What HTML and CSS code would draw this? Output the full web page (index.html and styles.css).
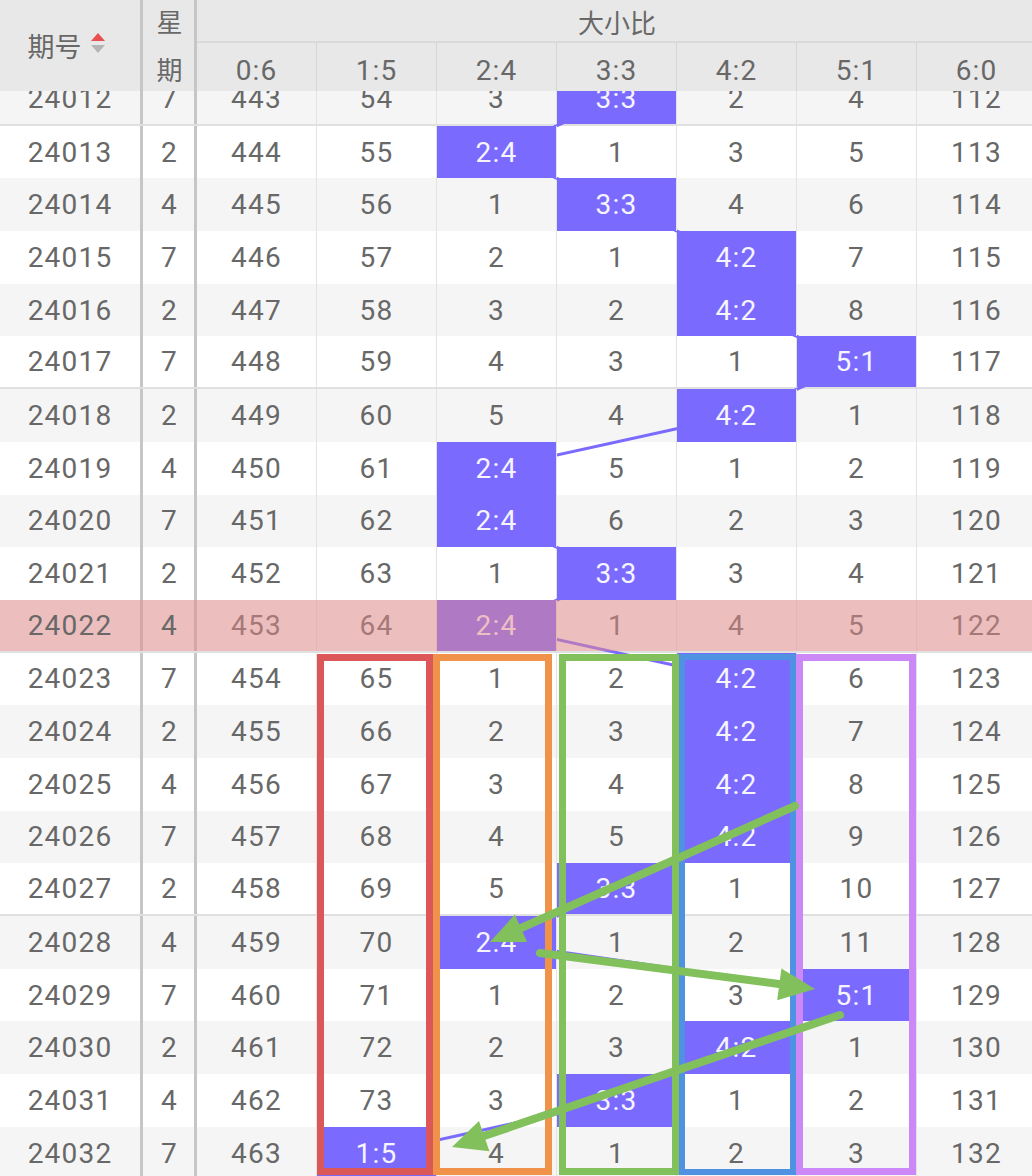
FILE: index.html
```html
<!DOCTYPE html>
<html lang="zh-CN">
<head>
<meta charset="utf-8">
<title>大小比走势</title>
<link rel="stylesheet" href="styles.css">
</head>
<body>
<div class="page">
  <div class="table">
    <div class="head">
      <div class="h-issue"><span>期号</span>
        <svg class="sort" width="14" height="21" viewBox="0 0 14 21"><polygon points="7,0 14,8 0,8" fill="#e94f4f"/><polygon points="0,12 14,12 7,20" fill="#b5b5b5"/></svg>
      </div>
      <div class="h-week"><span>星</span><span>期</span></div>
      <div class="h-ratio">
        <div class="h-title">大小比</div>
        <div class="h-cols"><div>0:6</div><div>1:5</div><div>2:4</div><div>3:3</div><div>4:2</div><div>5:1</div><div>6:0</div></div>
      </div>
    </div>
    <div class="body">
      <div class="rows">
        <div class="row alt grp"><div class="c c-issue">24012</div><div class="c c-week">7</div><div class="c c-r">443</div><div class="c c-r">54</div><div class="c c-r">3</div><div class="c c-r on">3:3</div><div class="c c-r">2</div><div class="c c-r">4</div><div class="c c-r">112</div></div>
        <div class="row"><div class="c c-issue">24013</div><div class="c c-week">2</div><div class="c c-r">444</div><div class="c c-r">55</div><div class="c c-r on">2:4</div><div class="c c-r">1</div><div class="c c-r">3</div><div class="c c-r">5</div><div class="c c-r">113</div></div>
        <div class="row alt"><div class="c c-issue">24014</div><div class="c c-week">4</div><div class="c c-r">445</div><div class="c c-r">56</div><div class="c c-r">1</div><div class="c c-r on">3:3</div><div class="c c-r">4</div><div class="c c-r">6</div><div class="c c-r">114</div></div>
        <div class="row"><div class="c c-issue">24015</div><div class="c c-week">7</div><div class="c c-r">446</div><div class="c c-r">57</div><div class="c c-r">2</div><div class="c c-r">1</div><div class="c c-r on">4:2</div><div class="c c-r">7</div><div class="c c-r">115</div></div>
        <div class="row alt"><div class="c c-issue">24016</div><div class="c c-week">2</div><div class="c c-r">447</div><div class="c c-r">58</div><div class="c c-r">3</div><div class="c c-r">2</div><div class="c c-r on">4:2</div><div class="c c-r">8</div><div class="c c-r">116</div></div>
        <div class="row grp"><div class="c c-issue">24017</div><div class="c c-week">7</div><div class="c c-r">448</div><div class="c c-r">59</div><div class="c c-r">4</div><div class="c c-r">3</div><div class="c c-r">1</div><div class="c c-r on">5:1</div><div class="c c-r">117</div></div>
        <div class="row alt"><div class="c c-issue">24018</div><div class="c c-week">2</div><div class="c c-r">449</div><div class="c c-r">60</div><div class="c c-r">5</div><div class="c c-r">4</div><div class="c c-r on">4:2</div><div class="c c-r">1</div><div class="c c-r">118</div></div>
        <div class="row"><div class="c c-issue">24019</div><div class="c c-week">4</div><div class="c c-r">450</div><div class="c c-r">61</div><div class="c c-r on">2:4</div><div class="c c-r">5</div><div class="c c-r">1</div><div class="c c-r">2</div><div class="c c-r">119</div></div>
        <div class="row alt"><div class="c c-issue">24020</div><div class="c c-week">7</div><div class="c c-r">451</div><div class="c c-r">62</div><div class="c c-r on">2:4</div><div class="c c-r">6</div><div class="c c-r">2</div><div class="c c-r">3</div><div class="c c-r">120</div></div>
        <div class="row"><div class="c c-issue">24021</div><div class="c c-week">2</div><div class="c c-r">452</div><div class="c c-r">63</div><div class="c c-r">1</div><div class="c c-r on">3:3</div><div class="c c-r">3</div><div class="c c-r">4</div><div class="c c-r">121</div></div>
        <div class="row alt grp hl"><div class="c c-issue"><span class="lift">24022</span></div><div class="c c-week"><span class="lift">4</span></div><div class="c c-r">453</div><div class="c c-r">64</div><div class="c c-r on">2:4</div><div class="c c-r">1</div><div class="c c-r">4</div><div class="c c-r">5</div><div class="c c-r">122</div></div>
        <div class="row"><div class="c c-issue">24023</div><div class="c c-week">7</div><div class="c c-r">454</div><div class="c c-r">65</div><div class="c c-r">1</div><div class="c c-r">2</div><div class="c c-r on">4:2</div><div class="c c-r">6</div><div class="c c-r">123</div></div>
        <div class="row alt"><div class="c c-issue">24024</div><div class="c c-week">2</div><div class="c c-r">455</div><div class="c c-r">66</div><div class="c c-r">2</div><div class="c c-r">3</div><div class="c c-r on">4:2</div><div class="c c-r">7</div><div class="c c-r">124</div></div>
        <div class="row"><div class="c c-issue">24025</div><div class="c c-week">4</div><div class="c c-r">456</div><div class="c c-r">67</div><div class="c c-r">3</div><div class="c c-r">4</div><div class="c c-r on">4:2</div><div class="c c-r">8</div><div class="c c-r">125</div></div>
        <div class="row alt"><div class="c c-issue">24026</div><div class="c c-week">7</div><div class="c c-r">457</div><div class="c c-r">68</div><div class="c c-r">4</div><div class="c c-r">5</div><div class="c c-r on">4:2</div><div class="c c-r">9</div><div class="c c-r">126</div></div>
        <div class="row grp"><div class="c c-issue">24027</div><div class="c c-week">2</div><div class="c c-r">458</div><div class="c c-r">69</div><div class="c c-r">5</div><div class="c c-r on">3:3</div><div class="c c-r">1</div><div class="c c-r">10</div><div class="c c-r">127</div></div>
        <div class="row alt"><div class="c c-issue">24028</div><div class="c c-week">4</div><div class="c c-r">459</div><div class="c c-r">70</div><div class="c c-r on">2:4</div><div class="c c-r">1</div><div class="c c-r">2</div><div class="c c-r">11</div><div class="c c-r">128</div></div>
        <div class="row"><div class="c c-issue">24029</div><div class="c c-week">7</div><div class="c c-r">460</div><div class="c c-r">71</div><div class="c c-r">1</div><div class="c c-r">2</div><div class="c c-r">3</div><div class="c c-r on">5:1</div><div class="c c-r">129</div></div>
        <div class="row alt"><div class="c c-issue">24030</div><div class="c c-week">2</div><div class="c c-r">461</div><div class="c c-r">72</div><div class="c c-r">2</div><div class="c c-r">3</div><div class="c c-r on">4:2</div><div class="c c-r">1</div><div class="c c-r">130</div></div>
        <div class="row"><div class="c c-issue">24031</div><div class="c c-week">4</div><div class="c c-r">462</div><div class="c c-r">73</div><div class="c c-r">3</div><div class="c c-r on">3:3</div><div class="c c-r">1</div><div class="c c-r">2</div><div class="c c-r">131</div></div>
        <div class="row alt"><div class="c c-issue">24032</div><div class="c c-week">7</div><div class="c c-r">463</div><div class="c c-r on">1:5</div><div class="c c-r">4</div><div class="c c-r">1</div><div class="c c-r">2</div><div class="c c-r">3</div><div class="c c-r">132</div></div>
      </div>

      <svg class="trend" width="1037" height="1085" viewBox="0 91 1037 1085">
        <polyline fill="none" stroke="#7a6afe" stroke-width="3" points="617,99.35 497,152.05 617,204.75 737,257.45 737,310.15 857,362.85 737,415.55 497,468.25 497,520.95 617,573.65 497,626.35 737,679.05 737,731.75 737,784.45 737,837.15 617,889.85 497,942.55 857,995.25 737,1047.95 617,1100.65 377,1153.35"/>
      </svg>

      <div class="hl-overlay"></div>

      <div class="box box-red"></div>
      <div class="box box-orange"></div>
      <div class="box box-green"></div>
      <div class="box box-blue"></div>
      <div class="box box-violet"></div>

      <svg class="arrows" width="1037" height="1085" viewBox="0 91 1037 1085">
        <g stroke="#82c05c" stroke-width="8" stroke-linecap="round" fill="none">
          <line x1="795" y1="806" x2="521" y2="928"/>
          <line x1="540" y1="953" x2="779" y2="984"/>
          <line x1="840" y1="1015" x2="484" y2="1136"/>
        </g>
        <g fill="#82c05c">
          <polygon points="490,942 514.9,914.5 527.1,941.9"/>
          <polygon points="815,989 777.2,1000.2 781.4,968.4"/>
          <polygon points="452,1147 479,1120.9 489.4,1151.3"/>
        </g>
      </svg>
    </div>
  </div>
</div>
</body>
</html>
```

FILE: styles.css
```css
html, body {
  margin: 0;
  padding: 0;
  overflow: hidden;
  background: #fff;
}

body {
  font-family: Roboto, "Noto Sans CJK SC", sans-serif;
  color: #686868;
}

.page {
  width: 1032px;
  height: 1176px;
  overflow: hidden;
}

.table {
  width: 1037px;
}

/* ---------- header ---------- */
.head {
  display: flex;
  height: 91px;
  background: #e8e8e8;
}

.h-issue {
  width: 143px;
  box-sizing: border-box;
  border-right: 3px solid #c6c6c6;
  display: flex;
  align-items: center;
  justify-content: center;
  gap: 9px;
  font-family: "Noto Sans CJK SC", sans-serif;
  font-size: 27px;
  padding-right: 8px;
}

.sort {
  display: block;
  margin-top: -4px;
}

.h-week {
  width: 54px;
  box-sizing: border-box;
  border-right: 3px solid #c6c6c6;
  display: flex;
  flex-direction: column;
  align-items: center;
  justify-content: space-between;
  font-family: "Noto Sans CJK SC", sans-serif;
  font-size: 26px;
  line-height: 32px;
  padding: 5px 0 6px 2px;
}

.h-ratio {
  flex: 1;
  display: flex;
  flex-direction: column;
}

.h-title {
  height: 43px;
  border-bottom: 2px solid #d9d9d9;
  display: flex;
  align-items: center;
  justify-content: center;
  font-family: "Noto Sans CJK SC", sans-serif;
  font-size: 26px;
  padding-top: 2px;
  box-sizing: border-box;
}

.h-cols {
  flex: 1;
  display: flex;
}

.h-cols div {
  width: 120px;
  box-sizing: border-box;
  border-right: 1px solid #d6d6d6;
  display: flex;
  align-items: center;
  justify-content: center;
  font-size: 28px;
  letter-spacing: 1px;
  padding-top: 7px;
}

/* ---------- body ---------- */
.body {
  position: relative;
  z-index: 0;
  height: 1085px;
  overflow: hidden;
}

.rows {
  margin-top: -18px;
}

.row {
  display: flex;
  height: 52.7px;
  box-sizing: border-box;
  background: #fff;
}

.row.alt {
  background: #f5f5f5;
}

.row.grp {
  border-bottom: 2px solid #e0e0e0;
}

.c {
  display: flex;
  align-items: center;
  justify-content: center;
  box-sizing: border-box;
  font-size: 28px;
  letter-spacing: 1.2px;
}

.c-issue {
  width: 143px;
  border-right: 3px solid #c6c6c6;
}

.c-week {
  width: 54px;
  border-right: 3px solid #c6c6c6;
  padding-left: 2px;
}

.c-r {
  width: 120px;
  border-right: 1px solid #e3e3e3;
}

.c-r.on {
  background: #7a6afe;
  color: #f6f4ff;
  position: relative;
  z-index: 2;
}

.lift {
  position: relative;
  z-index: 4;
}

/* ---------- overlays ---------- */
.trend {
  position: absolute;
  left: 0;
  top: 0;
  z-index: 1;
}

.hl-overlay {
  position: absolute;
  left: 0;
  top: 509px;
  width: 1037px;
  height: 50.7px;
  background: rgba(228, 135, 135, 0.5);
  z-index: 3;
}

.box {
  position: absolute;
  top: 563px;
  height: 521px;
  box-sizing: border-box;
  border: 7px solid;
  z-index: 4;
}

.box-red { left: 317px; width: 116px; border-color: #dc5858; }
.box-orange { left: 433px; width: 119px; border-color: #f0924a; }
.box-green { left: 559px; width: 120px; border-color: #82c05c; }
.box-blue { left: 679px; width: 117px; border-width: 6px; border-color: #5092e2; }
.box-violet { left: 796px; width: 120px; border-color: #cc88f6; }

.arrows {
  position: absolute;
  left: 0;
  top: 0;
  z-index: 5;
}
```
